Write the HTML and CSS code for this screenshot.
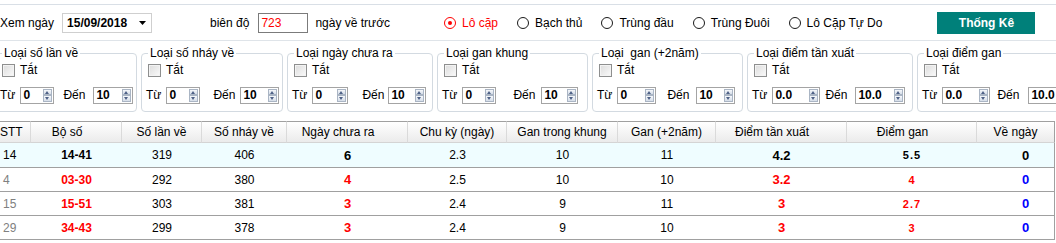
FILE: index.html
```html
<!DOCTYPE html>
<html lang="vi">
<head>
  <meta charset="UTF-8">
  <meta name="viewport" content="width=device-width, initial-scale=1.0">
  <title>Thống kê lô cặp</title>
  <link rel="stylesheet" href="styles.css">
</head>
<body>
  <div class="page">
    <div class="topline"></div>

    <div class="toolbar">
      <span>Xem ngày</span>
      <div class="date-box">
        <span>15/09/2018</span>
        <svg width="7" height="4" viewBox="0 0 7 4"><path d="M0 0H7L3.5 4Z" fill="#000"/></svg>
      </div>
      <span class="label-range">biên độ</span>
      <input class="range-input" type="text" value="723">
      <span class="label-after">ngày về trước</span>

      <label class="radio radio-first radio-on"><span class="radio-dot"></span>Lô cặp</label>
      <label class="radio"><span class="radio-dot"></span>Bạch thủ</label>
      <label class="radio"><span class="radio-dot"></span>Trùng đầu</label>
      <label class="radio"><span class="radio-dot"></span>Trùng Đuôi</label>
      <label class="radio"><span class="radio-dot"></span>Lô Cặp Tự Do</label>

      <button class="btn-stat" type="button">Thống Kê</button>
    </div>

    <div class="filters">
      <fieldset class="filter f-lan">
        <legend>Loại số lần về</legend>
        <label class="check"><span class="check-box"></span>Tắt</label>
        <div class="spin-row">
          <span>Từ</span>
          <span class="spin spin-from"><input value="0"><span class="spin-btns"><i class="up"></i><i class="down"></i></span></span>
          <span class="to">Đến</span>
          <span class="spin spin-to"><input value="10"><span class="spin-btns"><i class="up"></i><i class="down"></i></span></span>
        </div>
      </fieldset>

      <fieldset class="filter f-nhay">
        <legend>Loại số nháy về</legend>
        <label class="check"><span class="check-box"></span>Tắt</label>
        <div class="spin-row">
          <span>Từ</span>
          <span class="spin spin-from"><input value="0"><span class="spin-btns"><i class="up"></i><i class="down"></i></span></span>
          <span class="to">Đến</span>
          <span class="spin spin-to"><input value="10"><span class="spin-btns"><i class="up"></i><i class="down"></i></span></span>
        </div>
      </fieldset>

      <fieldset class="filter f-chua">
        <legend>Loại ngày chưa ra</legend>
        <label class="check"><span class="check-box"></span>Tắt</label>
        <div class="spin-row">
          <span>Từ</span>
          <span class="spin spin-from"><input value="0"><span class="spin-btns"><i class="up"></i><i class="down"></i></span></span>
          <span class="to">Đến</span>
          <span class="spin spin-to"><input value="10"><span class="spin-btns"><i class="up"></i><i class="down"></i></span></span>
        </div>
      </fieldset>

      <fieldset class="filter f-khung">
        <legend>Loại gan khung</legend>
        <label class="check"><span class="check-box"></span>Tắt</label>
        <div class="spin-row">
          <span>Từ</span>
          <span class="spin spin-from"><input value="0"><span class="spin-btns"><i class="up"></i><i class="down"></i></span></span>
          <span class="to">Đến</span>
          <span class="spin spin-to"><input value="10"><span class="spin-btns"><i class="up"></i><i class="down"></i></span></span>
        </div>
      </fieldset>

      <fieldset class="filter f-gan2">
        <legend>Loại&nbsp; gan (+2năm)</legend>
        <label class="check"><span class="check-box"></span>Tắt</label>
        <div class="spin-row">
          <span>Từ</span>
          <span class="spin spin-from"><input value="0"><span class="spin-btns"><i class="up"></i><i class="down"></i></span></span>
          <span class="to">Đến</span>
          <span class="spin spin-to"><input value="10"><span class="spin-btns"><i class="up"></i><i class="down"></i></span></span>
        </div>
      </fieldset>

      <fieldset class="filter f-tanxuat">
        <legend>Loại điểm tần xuất</legend>
        <label class="check"><span class="check-box"></span>Tắt</label>
        <div class="spin-row">
          <span>Từ</span>
          <span class="spin spin-from"><input value="0.0"><span class="spin-btns"><i class="up"></i><i class="down"></i></span></span>
          <span class="to">Đến</span>
          <span class="spin spin-to"><input value="10.0"><span class="spin-btns"><i class="up"></i><i class="down"></i></span></span>
        </div>
      </fieldset>

      <fieldset class="filter f-diemgan">
        <legend>Loại điểm gan</legend>
        <label class="check"><span class="check-box"></span>Tắt</label>
        <div class="spin-row">
          <span>Từ</span>
          <span class="spin spin-from"><input value="0.0"><span class="spin-btns"><i class="up"></i><i class="down"></i></span></span>
          <span class="to">Đến</span>
          <span class="spin spin-to"><input value="10.0"><span class="spin-btns"><i class="up"></i><i class="down"></i></span></span>
        </div>
      </fieldset>
    </div>

    <table class="result">
      <colgroup>
        <col class="w-stt"><col class="w-pair"><col class="w-lan"><col class="w-nhay"><col class="w-chua">
        <col class="w-chuky"><col class="w-khung"><col class="w-gan2"><col class="w-tx"><col class="w-gan"><col class="w-ve">
      </colgroup>
      <thead>
        <tr>
          <th class="stt">STT</th>
          <th class="shift">Bộ số</th>
          <th>Số lần về</th>
          <th>Số nháy về</th>
          <th class="shift">Ngày chưa ra</th>
          <th>Chu kỳ (ngày)</th>
          <th>Gan trong khung</th>
          <th>Gan (+2năm)</th>
          <th class="shift">Điểm tần xuất</th>
          <th class="shift">Điểm gan</th>
          <th>Về ngày</th>
        </tr>
      </thead>
      <tbody>
        <tr class="row-top">
          <td class="stt">14</td>
          <td class="pair">14-41</td>
          <td>319</td>
          <td>406</td>
          <td class="big">6</td>
          <td>2.3</td>
          <td>10</td>
          <td>11</td>
          <td class="big">4.2</td>
          <td class="small">5.5</td>
          <td class="big ve">0</td>
        </tr>
        <tr>
          <td class="stt">4</td>
          <td class="pair">03-30</td>
          <td>292</td>
          <td>380</td>
          <td class="big">4</td>
          <td>2.5</td>
          <td>10</td>
          <td>10</td>
          <td class="big">3.2</td>
          <td class="small">4</td>
          <td class="big ve">0</td>
        </tr>
        <tr>
          <td class="stt">15</td>
          <td class="pair">15-51</td>
          <td>303</td>
          <td>381</td>
          <td class="big">3</td>
          <td>2.4</td>
          <td>9</td>
          <td>11</td>
          <td class="big">3</td>
          <td class="small">2.7</td>
          <td class="big ve">0</td>
        </tr>
        <tr>
          <td class="stt">29</td>
          <td class="pair">34-43</td>
          <td>299</td>
          <td>378</td>
          <td class="big">3</td>
          <td>2.4</td>
          <td>9</td>
          <td>10</td>
          <td class="big">3</td>
          <td class="small">3</td>
          <td class="big ve">0</td>
        </tr>
      </tbody>
    </table>
  </div>
</body>
</html>
```

FILE: styles.css
```css
* {
  box-sizing: border-box;
}

body {
  margin: 0;
  font-family: "Liberation Sans", Arial, sans-serif;
  font-size: 12px;
  color: #000;
  background: #fff;
  overflow: hidden;
}

.page {
  margin-left: -5px;
  width: 1070px;
}

.topline {
  margin-top: 4px;
  height: 1px;
  background: #d9dfe6;
}

/* top bar */
.toolbar {
  display: flex;
  align-items: center;
  height: 36px;
  padding-left: 5px;
  border-bottom: 1px solid #dfe4e9;
}

.date-box {
  display: flex;
  align-items: center;
  justify-content: space-between;
  width: 90px;
  height: 20px;
  margin-left: 8px;
  padding: 0 5px 0 4px;
  border: 1px solid #cfcfcf;
  font-weight: bold;
}

.label-range {
  margin-left: 58px;
}

.range-input {
  width: 50px;
  height: 20px;
  margin-left: 9px;
  padding: 0 2px;
  border: 1px solid #7b7b7b;
  color: #f00;
  font: 12px "Liberation Sans", Arial, sans-serif;
  outline: none;
}

.label-after {
  margin-left: 7px;
}

.radio {
  display: flex;
  align-items: center;
  gap: 6px;
  margin-left: 19px;
}
.radio-first {
  margin-left: 54px;
}
.radio-dot {
  position: relative;
  width: 12px;
  height: 12px;
  border: 1px solid #1a1a1a;
  border-radius: 50%;
  background: #fff;
}
.radio-on {
  color: #f00;
}
.radio-on .radio-dot {
  border-color: #f00;
}
.radio-on .radio-dot::after {
  content: "";
  position: absolute;
  left: 3px;
  top: 3px;
  width: 4px;
  height: 4px;
  border-radius: 50%;
  background: #f00;
}

.btn-stat {
  width: 98px;
  height: 22px;
  margin-left: 55px;
  border: 0;
  background: #00807a;
  color: #fff;
  font: bold 12px "Liberation Sans", Arial, sans-serif;
}

/* filter boxes */
.filters {
  display: flex;
  gap: 4px;
  padding-top: 5px;
}
.filter {
  flex: none;
  min-width: 0;
  margin: 0;
  padding: 0 4px 6px;
  border: 1px solid #d3dae1;
  border-radius: 4px;
}
.filter legend {
  margin-left: 2px;
  padding: 0 2px;
  line-height: 14px;
}

.check {
  display: flex;
  align-items: center;
  gap: 5px;
  height: 20px;
  padding-left: 2px;
}
.check-box {
  width: 13px;
  height: 13px;
  border: 1px solid #8e8f8f;
  background: linear-gradient(135deg, #dcdcdc, #fafafa);
  box-shadow: inset 0 0 0 1px #f3f3f3;
}

.spin-row {
  display: flex;
  align-items: center;
  height: 20px;
  margin-top: 5px;
}
.spin {
  display: flex;
  flex: none;
  height: 17px;
  margin-left: 5px;
  border: 1px solid #a4a4a4;
  background: #fff;
}
.spin input {
  width: 100%;
  min-width: 0;
  padding: 0 0 0 2px;
  border: 0;
  font: bold 12px "Liberation Sans", Arial, sans-serif;
  outline: none;
}
.spin-btns {
  display: flex;
  flex-direction: column;
  flex: none;
  width: 9px;
  margin: 1px 1px 1px 0;
}
.spin-btns i {
  position: relative;
  flex: 1;
  border: 1px solid #aab5c4;
  background: linear-gradient(#f6f8fb, #d6dee9);
}
.spin-btns i::after {
  content: "";
  position: absolute;
  left: 1px;
  border-left: 2.5px solid transparent;
  border-right: 2.5px solid transparent;
}
.spin-btns .up::after {
  top: 1px;
  border-bottom: 3px solid #4f6187;
}
.spin-btns .down::after {
  top: 1px;
  border-top: 3px solid #4f6187;
}

.f-lan { width: 142px; }
.f-lan .spin-from { width: 34px; }
.f-lan .to { margin-left: 9px; }
.f-lan .spin-to { width: 40px; margin-left: 8px; }

.f-nhay { width: 142px; }
.f-nhay .spin-from { width: 34px; }
.f-nhay .to { margin-left: 13px; }
.f-nhay .spin-to { width: 39px; }

.f-chua { width: 146px; }
.f-chua .spin-from { width: 36px; }
.f-chua .to { margin-left: 14px; }
.f-chua .spin-to { width: 38px; margin-left: 4px; }

.f-khung { width: 151px; }
.f-khung .spin-from { width: 34px; }
.f-khung .to { margin-left: 17px; }
.f-khung .spin-to { width: 37px; margin-left: 6px; }

.f-gan2 { width: 151px; }
.f-gan2 .spin-from { width: 39px; }
.f-gan2 .to { margin-left: 11px; }
.f-gan2 .spin-to { width: 39px; margin-left: 7px; }

.f-tanxuat { width: 166px; }
.f-tanxuat .spin-from { width: 48px; }
.f-tanxuat .to { margin-left: 5px; }
.f-tanxuat .spin-to { width: 50px; margin-left: 8px; }

.f-diemgan { width: 166px; }
.f-diemgan .spin-from { width: 48px; }
.f-diemgan .to { margin-left: 7px; }
.f-diemgan .spin-to { width: 50px; margin-left: 9px; }

/* result table */
.result {
  width: 1060px;
  margin-top: 9px;
  border-collapse: separate;
  border-spacing: 0;
  table-layout: fixed;
}
.w-stt { width: 36px; }
.w-pair { width: 91px; }
.w-lan { width: 80px; }
.w-nhay { width: 85px; }
.w-chua { width: 121px; }
.w-chuky { width: 99px; }
.w-khung { width: 111px; }
.w-gan2 { width: 98px; }
.w-tx { width: 131px; }
.w-gan { width: 130px; }
.w-ve { width: 78px; }

.result th {
  height: 22px;
  padding: 0;
  font-weight: normal;
  background: linear-gradient(#ffffff, #ebebeb);
  border-top: 1px solid #a0a0a0;
  border-right: 1px solid #dadada;
  border-bottom: 1px solid #d4d4d4;
}
.result th.shift {
  padding-right: 18px;
}
.result td {
  height: 24px;
  padding: 0;
  text-align: center;
  border-bottom: 1px solid #a0a0a0;
}
.result tr > :last-child {
  border-right: 1px solid #a0a0a0;
}
.result .stt {
  text-align: left;
  padding-left: 5px;
}
.result td.stt {
  padding-left: 8px;
  color: #808080;
}

.row-top td {
  height: 25px;
  background: #effdff;
}
.row-top td.stt {
  color: #000;
}

.pair,
.big,
.small {
  font-weight: bold;
  color: #f00;
}
.big {
  font-size: 13px;
}
.small {
  font-size: 11px;
  letter-spacing: 1px;
}
.ve {
  color: #00f;
  padding-left: 20px !important;
}
.row-top .pair,
.row-top .big,
.row-top .small {
  color: #000;
}
```
